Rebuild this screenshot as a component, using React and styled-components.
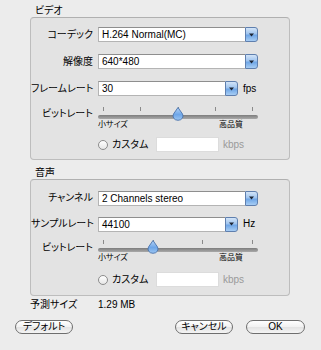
import React from 'react';
import styled, { createGlobalStyle } from 'styled-components';

const GlobalStyle = createGlobalStyle`
  html, body {
    margin: 0;
    padding: 0;
    background: #ececec;
  }
  body {
    font-family: "Liberation Sans", "Noto Sans CJK JP", sans-serif;
    font-size: 10px;
    color: #000;
    font-feature-settings: "palt";
  }
`;

const Window = styled.div`
  width: 321px;
  height: 350px;
  box-sizing: border-box;
  background: #ececec;
  padding-left: 15px;
`;

const Section = styled.div`
  margin-left: 15px;
  margin-top: ${p => p.$mt || 0}px;
  width: 260px;
`;

const SectionTitle = styled.div`
  padding: 5px 0 0 5px;
  line-height: 12px;
  height: 12px;
`;

const Group = styled.div`
  box-sizing: border-box;
  border: 1px solid #bdbdbd;
  border-top-color: #b0b0b0;
  border-radius: 4px;
  background: #e3e3e3;
  padding-top: ${p => p.$pt}px;
  padding-bottom: ${p => p.$pb}px;
`;

const Row = styled.div`
  display: grid;
  grid-template-columns: 62px auto auto;
  column-gap: 5px;
  justify-content: start;
  align-items: ${p => p.$align || 'center'};
  height: ${p => p.$h}px;
`;

const Label = styled.div`
  text-align: right;
  line-height: 12px;
  white-space: nowrap;
  padding-top: ${p => p.$pt || 0}px;
`;

const Unit = styled.span`
  color: ${p => (p.$muted ? '#9a9a9a' : '#000')};
  line-height: 12px;
  margin-left: ${p => p.$ml || 0}px;
`;

const PopupBox = styled.div`
  display: flex;
  width: ${p => p.$w}px;
  height: 15px;
  box-sizing: border-box;
`;

const PopupField = styled.div`
  flex: 1;
  background: #fff;
  border: 1px solid #b4b4b4;
  border-top-color: #8e8e8e;
  border-right: none;
  padding-left: 3px;
  line-height: 13px;
  white-space: nowrap;
  overflow: hidden;
`;

const PopupArrow = styled.div`
  width: 13px;
  box-sizing: border-box;
  border: 1px solid #5f7fae;
  border-radius: 0 3px 3px 0;
  background: linear-gradient(#d3e4f7 0%, #9fc4ef 45%, #6fa6e6 55%, #a7cdf4 100%);
  display: flex;
  align-items: center;
  justify-content: center;
`;

const Popup = ({ w, value }) => (
  <PopupBox $w={w}>
    <PopupField>{value}</PopupField>
    <PopupArrow>
      <svg width="5" height="4" viewBox="0 0 5 4">
        <path d="M0 0.5 H5 L2.5 3.5 Z" fill="#1d2533" />
      </svg>
    </PopupArrow>
  </PopupBox>
);

const SliderBox = styled.div`
  width: 160px;
  padding-top: ${p => p.$pt}px;
`;

const Ticks = styled.div`
  display: flex;
  justify-content: space-between;
  padding: 0 5px;
  height: 4px;
`;

const Tick = styled.span`
  width: 1px;
  height: 4px;
  background: #8a8a8a;
`;

const Track = styled.div`
  position: relative;
  margin-top: 4px;
  height: 4px;
  border-radius: 2px;
  background: linear-gradient(#7d7d7d, #a9a9a9);
`;

const Thumb = styled.svg`
  position: absolute;
  top: -8px;
  margin-left: -6px;
`;

const ScaleLabels = styled.div`
  display: flex;
  justify-content: space-between;
  padding-right: 15px;
  margin-top: 1px;
  font-size: 8px;
  line-height: 10px;
`;

const Slider = ({ ticks, value, pt }) => {
  const left = 5 + (150 * value) / (ticks - 1);
  return (
    <SliderBox $pt={pt}>
      <Ticks>
        {Array.from({ length: ticks }).map((_, i) => (
          <Tick key={i} />
        ))}
      </Ticks>
      <Track>
        <Thumb width="12" height="14" viewBox="0 0 12 14" style={{ left }}>
          <defs>
            <linearGradient id="thumbGrad" x1="0" y1="0" x2="0" y2="1">
              <stop offset="0" stopColor="#b6d4f6" />
              <stop offset="0.55" stopColor="#6ea6e8" />
              <stop offset="1" stopColor="#9cc6f2" />
            </linearGradient>
          </defs>
          <path
            d="M6 0.5 L10.5 7 Q11.5 9 10.5 11 Q9 13.3 6 13.3 Q3 13.3 1.5 11 Q0.5 9 1.5 7 Z"
            fill="url(#thumbGrad)"
            stroke="#4a73ad"
            strokeWidth="0.9"
          />
        </Thumb>
      </Track>
      <ScaleLabels>
        <span>小サイズ</span>
        <span>高品質</span>
      </ScaleLabels>
    </SliderBox>
  );
};

const RadioLine = styled.div`
  display: flex;
  align-items: center;
`;

const RadioDot = styled.span`
  width: 10px;
  height: 10px;
  box-sizing: border-box;
  border-radius: 50%;
  border: 1px solid #8c8c8c;
  background: linear-gradient(#ffffff, #e6e6e6);
`;

const RadioText = styled.span`
  margin-left: 4px;
  line-height: 12px;
  width: 44px;
`;

const Field = styled.div`
  width: 63px;
  height: 15px;
  box-sizing: border-box;
  background: #fff;
  border: 1px solid #dcdcdc;
`;

const Summary = styled.div`
  display: flex;
  margin: 3px 0 0 15px;
  line-height: 12px;
`;

const SummaryLabel = styled.span`
  width: 68px;
`;

const ButtonBar = styled.div`
  display: flex;
  margin-top: 9px;
  width: 290px;
`;

const Button = styled.button`
  font: inherit;
  font-feature-settings: "palt";
  width: ${p => p.$w}px;
  height: 14px;
  padding: 0;
  margin-left: ${p => p.$ml || 0}px;
  border: 1px solid #6e6e6e;
  border-radius: 7px;
  background: linear-gradient(#ffffff, #f1f1f1 50%, #e3e3e3 51%, #f4f4f4);
  color: #000;
  line-height: 12px;
`;

const Custom = () => (
  <Row $h={17}>
    <span />
    <RadioLine>
      <RadioDot />
      <RadioText>カスタム</RadioText>
      <Field />
      <Unit $muted $ml={4}>kbps</Unit>
    </RadioLine>
  </Row>
);

export default function App() {
  return (
    <>
      <GlobalStyle />
      <Window>
        <Section>
          <SectionTitle>ビデオ</SectionTitle>
          <Group $pt={3} $pb={6}>
            <Row $h={27}>
              <Label>コーデック</Label>
              <Popup w={160} value="H.264 Normal(MC)" />
            </Row>
            <Row $h={27}>
              <Label>解像度</Label>
              <Popup w={160} value="640*480" />
            </Row>
            <Row $h={27}>
              <Label>フレームレート</Label>
              <Popup w={140} value="30" />
              <Unit>fps</Unit>
            </Row>
            <Row $h={34} $align="start">
              <Label $pt={6}>ビットレート</Label>
              <Slider ticks={5} value={2} pt={5} />
            </Row>
            <Custom />
          </Group>
        </Section>

        <Section $mt={2}>
          <SectionTitle>音声</SectionTitle>
          <Group $pt={5} $pb={7}>
            <Row $h={26}>
              <Label>チャンネル</Label>
              <Popup w={160} value="2 Channels stereo" />
            </Row>
            <Row $h={26}>
              <Label>サンプルレート</Label>
              <Popup w={140} value="44100" />
              <Unit>Hz</Unit>
            </Row>
            <Row $h={34} $align="start">
              <Label $pt={5}>ビットレート</Label>
              <Slider ticks={4} value={1} pt={3} />
            </Row>
            <Custom />
          </Group>
        </Section>

        <Summary>
          <SummaryLabel>予測サイズ</SummaryLabel>
          <span>1.29 MB</span>
        </Summary>

        <ButtonBar>
          <Button $w={58}>デフォルト</Button>
          <Button $w={58} $ml={102}>キャンセル</Button>
          <Button $w={59} $ml={13}>OK</Button>
        </ButtonBar>
      </Window>
    </>
  );
}
